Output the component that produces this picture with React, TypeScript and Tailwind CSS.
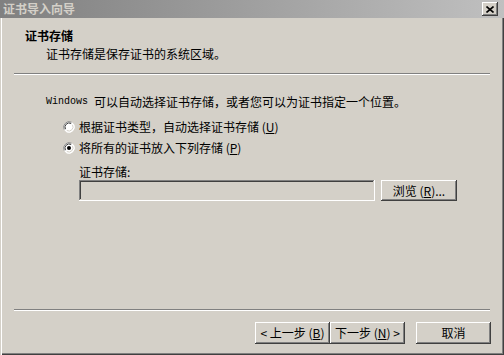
import React from "react";

const raised =
  "shadow-[inset_-1px_-1px_#404040,inset_1px_1px_#ffffff,inset_-2px_-2px_#808080,inset_2px_2px_#d4d0c8]";
const sunken =
  "shadow-[inset_-1px_-1px_#ffffff,inset_1px_1px_#808080,inset_-2px_-2px_#d4d0c8,inset_2px_2px_#404040]";

function Radio({ checked }: { checked?: boolean }) {
  return (
    <svg width="12" height="12" viewBox="0 0 12 12" className="shrink-0">
      <circle cx="6" cy="6" r="5.5" fill="#ffffff" />
      <path d="M1.2 8.5 A5.5 5.5 0 0 1 8.5 1.2" stroke="#808080" strokeWidth="1" fill="none" />
      <path d="M2.5 8.2 A4.2 4.2 0 0 1 8.2 2.5" stroke="#404040" strokeWidth="1" fill="none" />
      <path d="M10.8 3.5 A5.5 5.5 0 0 1 3.5 10.8" stroke="#ffffff" strokeWidth="1" fill="none" />
      <path d="M9.5 3.8 A4.2 4.2 0 0 1 3.8 9.5" stroke="#d4d0c8" strokeWidth="1" fill="none" />
      {checked && <circle cx="6" cy="6" r="2" fill="#000000" />}
    </svg>
  );
}

function Btn({ children, className = "" }: { children: React.ReactNode; className?: string }) {
  return (
    <div
      className={`h-[22px] w-[75px] flex items-center justify-center bg-[#d4d0c8] ${raised} ${className}`}
    >
      {children}
    </div>
  );
}

export default function App() {
  return (
    <div className="w-[504px] h-[355px] bg-[#d4d0c8] flex flex-col overflow-hidden text-black text-[12px] leading-[12px] font-['Noto_Sans_CJK_SC',sans-serif]">
      {/* Title bar */}
      <div className="h-[18px] shrink-0 flex items-center justify-between bg-linear-to-r from-[#808080] to-[#c0c0c0] pl-[3px] pr-[6px]">
        <span className="text-[12px] font-bold text-[#d4d0c8]">证书导入向导</span>
        <div className={`w-[16px] h-[14px] bg-[#d4d0c8] flex items-center justify-center ${raised}`}>
          <svg width="8" height="7" viewBox="0 0 8 7">
            <path d="M0.5 0.5 L7.5 6.5 M7.5 0.5 L0.5 6.5" stroke="#000" strokeWidth="1.6" />
          </svg>
        </div>
      </div>

      {/* Body */}
      <div className="flex-1 flex flex-col shadow-[inset_1px_0_#d4d0c8,inset_2px_0_#ffffff,inset_-1px_-1px_#404040,inset_-2px_-2px_#808080] pb-[11px]">
        <div className="pt-[12px] pl-[25px] font-bold">证书存储</div>
        <div className="mt-[6px] pl-[46px]">证书存储是保存证书的系统区域。</div>
        <div className="mt-[13px] ml-[14px] w-[476px] h-[2px] border-t border-[#808080] bg-white" />

        <div className="mt-[21px] pl-[46px] flex items-center">
          <span className="font-['Liberation_Mono',monospace] text-[10px] w-[48px]">Windows</span>
          <span>可以自动选择证书存储，或者您可以为证书指定一个位置。</span>
        </div>

        <div className="mt-[13px] pl-[63px] flex items-center gap-[4px]">
          <Radio />
          <span>
            根据证书类型，自动选择证书存储 (<u>U</u>)
          </span>
        </div>
        <div className="mt-[9px] pl-[63px] flex items-center gap-[4px]">
          <Radio checked />
          <span>
            将所有的证书放入下列存储 (<u>P</u>)
          </span>
        </div>

        <div className="mt-[12px] pl-[79px]">证书存储:</div>
        <div className="mt-[2px] pl-[79px] flex items-center gap-[6px]">
          <div className={`w-[296px] h-[21px] bg-[#d4d0c8] ${sunken}`} />
          <div className={`w-[76px] h-[21px] flex items-center justify-center bg-[#d4d0c8] ${raised}`}>
            浏览 (<u>R</u>)...
          </div>
        </div>

        <div className="mt-auto ml-[14px] w-[476px] h-[2px] border-t border-[#808080] bg-white" />
        <div className="mt-[11px] flex justify-end pr-[13px]">
          <Btn>
            &lt; 上一步 (<u>B</u>)
          </Btn>
          <Btn>
            下一步 (<u>N</u>) &gt;
          </Btn>
          <Btn className="ml-[11px]">取消</Btn>
        </div>
      </div>
    </div>
  );
}
